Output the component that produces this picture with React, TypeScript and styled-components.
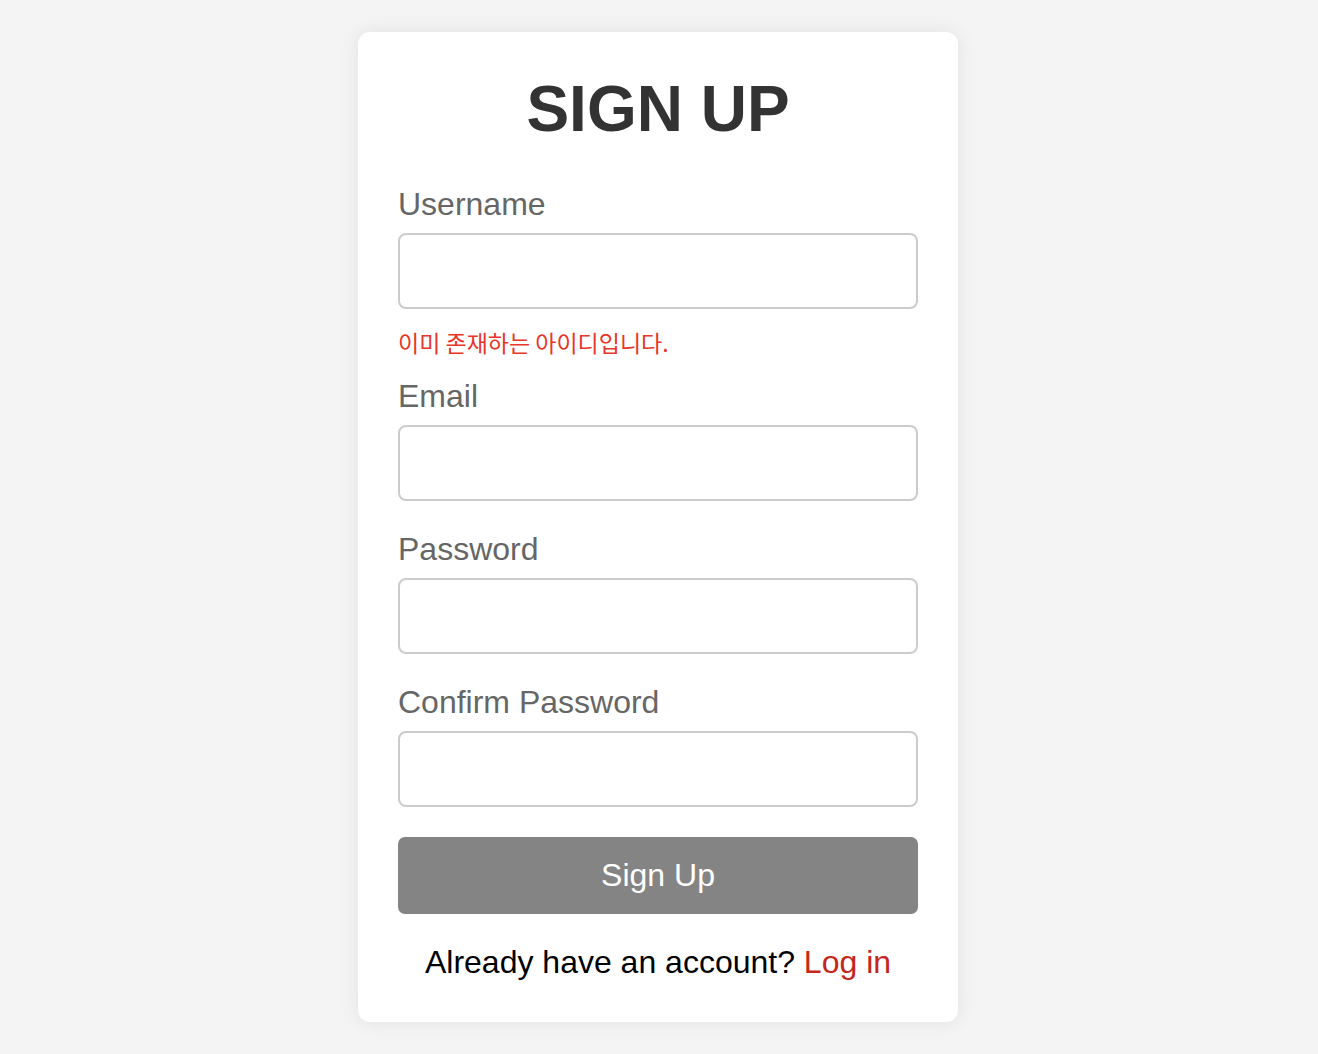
import styled, { createGlobalStyle } from "styled-components";

const GlobalStyle = createGlobalStyle`
  * {
    box-sizing: border-box;
  }

  body {
    margin: 0;
    background-color: #f4f4f4;
    font-family: "Liberation Sans", Arial, "Noto Sans CJK KR", sans-serif;
  }
`;

type FieldProps = {
  label: string;
  type?: string;
  error?: string;
};

function Field({ label, type = "text", error }: FieldProps) {
  return (
    <FieldGroup>
      <Label>{label}</Label>
      <Input type={type} />
      {error && <ErrorText>{error}</ErrorText>}
    </FieldGroup>
  );
}

export default function App() {
  return (
    <Page>
      <GlobalStyle />
      <Card>
        <Title>SIGN UP</Title>
        <Form onSubmit={(e) => e.preventDefault()}>
          <Field label="Username" error="이미 존재하는 아이디입니다." />
          <Field label="Email" type="email" />
          <Field label="Password" type="password" />
          <Field label="Confirm Password" type="password" />
          <SubmitButton type="submit">Sign Up</SubmitButton>
        </Form>
        <Footer>
          Already have an account? <LoginLink href="#">Log in</LoginLink>
        </Footer>
      </Card>
    </Page>
  );
}

const Page = styled.main`
  display: flex;
  justify-content: center;
  padding: 32px 2px 32px 0;
  min-height: 100vh;
`;

const Card = styled.div`
  width: 600px;
  padding: 40px;
  background-color: #ffffff;
  border-radius: 12px;
  box-shadow: 0 0 20px rgba(0, 0, 0, 0.08);
  display: flex;
  flex-direction: column;
  gap: 30px;
`;

const Title = styled.h1`
  margin: 0 0 10px;
  text-align: center;
  font-size: 64px;
  font-weight: 700;
  color: #333333;
`;

const Form = styled.form`
  display: flex;
  flex-direction: column;
  gap: 30px;
`;

const FieldGroup = styled.div`
  display: flex;
  flex-direction: column;
`;

const Label = styled.label`
  font-size: 32px;
  color: #666666;
  margin-bottom: 10px;
`;

const Input = styled.input`
  height: 76px;
  padding: 0 16px;
  border: 2px solid #cccccc;
  border-radius: 8px;
  font-size: 28px;
  font-family: inherit;
  outline: none;
`;

const ErrorText = styled.p`
  margin: 22px 0 -6px;
  font-family: "Noto Sans CJK KR", sans-serif;
  font-size: 23px;
  line-height: 23px;
  color: #e8362a;
`;

const SubmitButton = styled.button`
  height: 77px;
  border: none;
  border-radius: 7px;
  background-color: #848484;
  color: #ffffff;
  font-family: inherit;
  font-size: 32px;
  cursor: pointer;
`;

const Footer = styled.p`
  margin: 0;
  text-align: center;
  font-size: 32px;
  color: #000000;
`;

const LoginLink = styled.a`
  color: #c4261b;
  text-decoration: none;
`;
